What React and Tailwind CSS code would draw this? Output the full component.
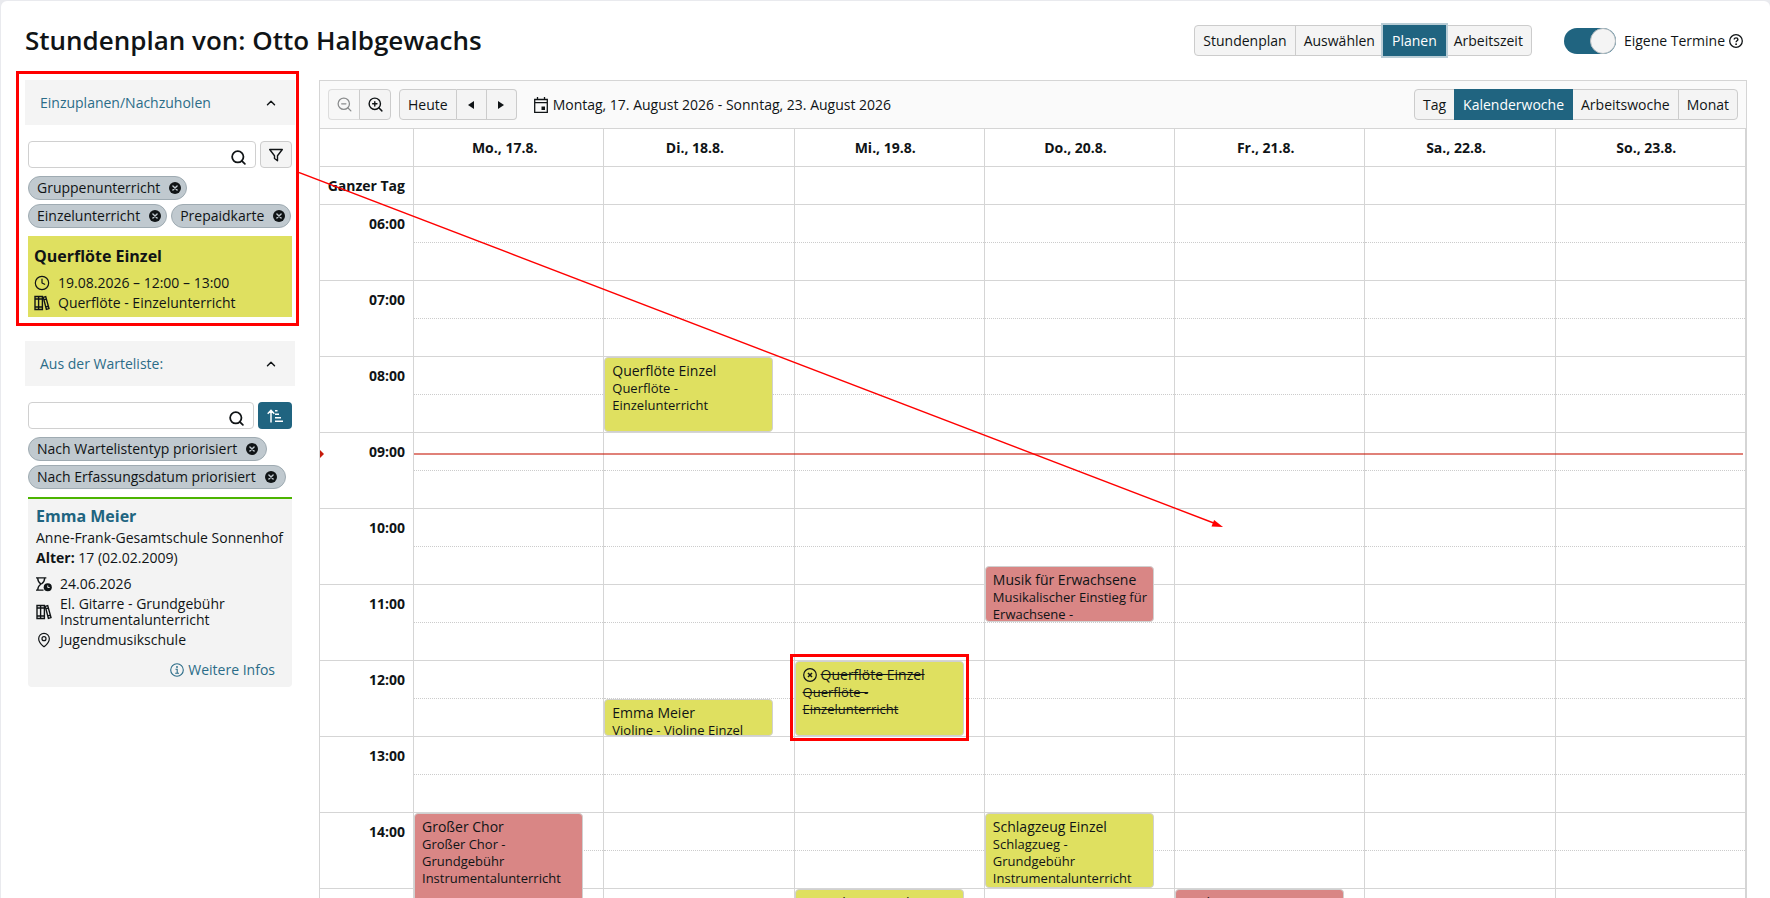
import { useState } from "react";
import { Search, ZoomIn, ZoomOut, ChevronUp, Clock, MapPin } from "lucide-react";

const HOUR_HEIGHT = 76;
const FIRST_HOUR = 6;

const hours = [6, 7, 8, 9, 10, 11, 12, 13, 14, 15];

const days = [
  "Mo., 17.8.",
  "Di., 18.8.",
  "Mi., 19.8.",
  "Do., 20.8.",
  "Fr., 21.8.",
  "Sa., 22.8.",
  "So., 23.8.",
];

const events = [
  { day: 1, start: 8, end: 9, title: "Querflöte Einzel", text: "Querflöte - Einzelunterricht", color: "yellow" },
  { day: 1, start: 12.5, end: 13, title: "Emma Meier", text: "Violine - Violine Einzel", color: "yellow" },
  { day: 2, start: 12, end: 13, title: "Querflöte Einzel", text: "Querflöte - Einzelunterricht", color: "yellow", cancelled: true },
  { day: 3, start: 10.75, end: 11.5, title: "Musik für Erwachsene", text: "Musikalischer Einstieg für Erwachsene -", color: "red" },
  { day: 0, start: 14, end: 16, title: "Großer Chor", text: "Großer Chor - Grundgebühr Instrumentalunterricht", color: "red" },
  { day: 3, start: 14, end: 15, title: "Schlagzeug Einzel", text: "Schlagzueg - Grundgebühr Instrumentalunterricht", color: "yellow" },
  { day: 2, start: 15, end: 16, title: "Saxophon Einzel", text: "Saxophon - Einzelunterricht", color: "yellow" },
  { day: 4, start: 15, end: 16, title: "Orchester", text: "Orchester - Grundgebühr", color: "red" },
];

const eventColors = {
  yellow: "bg-[#dfe060]",
  red: "bg-[#d98685]",
};

function BooksIcon() {
  return (
    <svg viewBox="0 0 16 16" className="h-4 w-4 shrink-0" fill="none" stroke="currentColor" strokeWidth="1.4">
      <path d="M1 1.5h3.6v13H1zM4.6 1.5h3.8v13H4.6zM1 4h7.4M1 12h7.4" />
      <path d="M9.3 2.4l2.4-.8 3.3 12-2.6.8zM10 4.8l2.4-.7M11.9 12l2.5-.8" />
    </svg>
  );
}

function HourglassIcon() {
  return (
    <svg viewBox="0 0 17 16" className="h-4 w-4 shrink-0" fill="none" stroke="currentColor" strokeWidth="1.4">
      <path d="M0 1.5h11M0 14.5h8M1.8 1.5c0 3.6 1 4.7 3.4 6.5C2.8 9.8 1.8 11 1.8 14.5M9.2 1.5c0 3.6-1 4.7-3.4 6.5" />
      <circle cx="12.5" cy="11.5" r="4.3" fill="currentColor" stroke="none" />
      <path d="M12.5 9.5v2.2h2" stroke="#f3f3f3" strokeWidth="1" />
    </svg>
  );
}

function FilterIcon() {
  return (
    <svg viewBox="0 0 16 16" className="h-4 w-4" fill="none" stroke="currentColor" strokeWidth="1.4" strokeLinejoin="round">
      <path d="M1.7 2.5h12.6L9.5 8.7v5L6.5 11.5V8.7z" />
    </svg>
  );
}

function SortIcon() {
  return (
    <svg viewBox="0 0 16 14" className="h-[14px] w-4" fill="none" stroke="currentColor" strokeWidth="1.5">
      <path d="M4 13.5V1.5M.7 4.7L4 1.4l3.3 3.3M8 1.7h2.5M8 5.2h4M8 8.7h6M8 12.2h8" />
    </svg>
  );
}

function CalendarIcon() {
  return (
    <svg viewBox="0 0 14 16" className="h-4 w-[14px]" fill="none" stroke="currentColor" strokeWidth="1.3">
      <path d="M.7 2.5h12.6v12.8H.7zM.7 5.7h12.6M3.5 0v2.5M10.500 0v2.5" />
      <path d="M7.500 9.500h3.500v3.500H7.500z" fill="currentColor" stroke="none" />
    </svg>
  );
}

function RemoveIcon() {
  return (
    <svg viewBox="0 0 12 12" className="h-3 w-3">
      <circle cx="6" cy="6" r="6" fill="#101416" />
      <path d="M3.9 3.9l4.2 4.2M8.1 3.9L3.9 8.1" stroke="#c0c9cf" strokeWidth="1.4" strokeLinecap="round" />
    </svg>
  );
}

function CancelledIcon() {
  return (
    <svg viewBox="0 0 14 14" className="h-[14px] w-[14px] shrink-0" fill="none" stroke="currentColor">
      <circle cx="7" cy="7" r="6.3" strokeWidth="1.2" />
      <path d="M5 5l4 4M9 5L5 9" strokeWidth="1.5" />
    </svg>
  );
}

function InfoIcon() {
  return (
    <svg viewBox="0 0 14 14" className="h-[14px] w-[14px]" fill="none" stroke="currentColor">
      <circle cx="7" cy="7" r="6.3" strokeWidth="1.1" />
      <path d="M5.5 6.2H7.2v4M5.2 10.2h3.8" strokeWidth="1.1" />
      <circle cx="7" cy="4" r=".9" fill="currentColor" stroke="none" />
    </svg>
  );
}

function HelpIcon() {
  return (
    <svg viewBox="0 0 14 14" className="h-[14px] w-[14px]" fill="none" stroke="currentColor">
      <circle cx="7" cy="7" r="6.3" strokeWidth="1.3" />
      <path d="M5.2 5.6c0-2.4 3.7-2.3 3.7-.1 0 1.3-1.8 1.3-1.8 2.7" strokeWidth="1.4" />
      <circle cx="7.1" cy="10.2" r=".9" fill="currentColor" stroke="none" />
    </svg>
  );
}

function ButtonGroup({ items, active, onSelect, ring }) {
  return (
    <div className="flex">
      {items.map((item) => (
        <button
          key={item}
          onClick={() => onSelect(item)}
          className={
            item === active
              ? `relative -ml-px h-[31px] border border-[#206480] bg-[#206480] px-2 text-white ${ring ? "ring-2 ring-[#b9cdd6]" : ""}`
              : "-ml-px h-[31px] border border-[#cccccc] bg-[#f4f4f4] px-2 first:ml-0 first:rounded-l last:rounded-r"
          }
        >
          {item}
        </button>
      ))}
    </div>
  );
}

function Chip({ label, wide }) {
  return (
    <span
      className={`flex h-6 items-center gap-[9px] rounded-full border border-[#9fabb2] bg-[#c0c9cf] pl-2 ${wide ? "pr-2" : "pr-[5px]"}`}
    >
      {label}
      <button aria-label={`${label} entfernen`}>
        <RemoveIcon />
      </button>
    </span>
  );
}

function PanelHeader({ title }) {
  return (
    <button className="flex h-[45px] w-full items-center justify-between bg-[#f4f4f4] pl-[15px] pr-[17px] text-left text-[#2b6c88]">
      {title}
      <ChevronUp size={14} strokeWidth={2.5} className="text-[#101416]" />
    </button>
  );
}

function SearchBox({ label }) {
  return (
    <div className="relative grow">
      <input
        type="text"
        aria-label={label}
        className="block h-[27px] w-full rounded border border-[#d0d0d0] bg-white pl-2 pr-8 outline-none"
      />
      <Search size={17} strokeWidth={2.5} className="absolute right-[9px] top-2" />
    </div>
  );
}

function CalendarEvent({ event }) {
  const { start, end, title, text, color, cancelled } = event;
  return (
    <div
      className="absolute left-0 z-10 w-[169px]"
      style={{
        top: (start % 1) * HOUR_HEIGHT,
        height: (end - start) * HOUR_HEIGHT - 1,
      }}
    >
      <div
        className={`h-full overflow-hidden rounded border border-[#d0d0d0] pl-[7px] pr-[3px] pt-[3px] ${eventColors[color]} ${cancelled ? "line-through" : ""}`}
      >
        <div className="flex items-center gap-1 leading-[19px]">
          {cancelled && <CancelledIcon />}
          {title}
        </div>
        <div className="text-[13px] leading-[17px]">{text}</div>
      </div>
      {cancelled && (
        <div className="pointer-events-none absolute -inset-x-[5px] -bottom-[5px] -top-[7px] border-3 border-[#ff0000]" />
      )}
    </div>
  );
}

export default function App() {
  const [mode, setMode] = useState("Planen");
  const [view, setView] = useState("Kalenderwoche");
  const [ownEvents, setOwnEvents] = useState(true);

  const nowTop = 76 + (9 - FIRST_HOUR) * HOUR_HEIGHT + 20;

  return (
    <div className="h-screen overflow-hidden bg-[#e9eaee] pl-px pt-px font-['Open_Sans','Noto_Sans',sans-serif] text-sm text-[#101416]">
      <div className="min-h-full rounded-t-md bg-white pl-6 pr-[23px] pt-6">
        {/* Page header */}
        <header className="mb-6 flex h-[31px] items-center justify-between">
          <h1 className="text-[26px] font-semibold leading-[31px]">
            Stundenplan von: Otto Halbgewachs
          </h1>
          <div className="flex items-center gap-8 pr-1">
            <ButtonGroup
              items={["Stundenplan", "Auswählen", "Planen", "Arbeitszeit"]}
              active={mode}
              onSelect={setMode}
              ring
            />
            <label className="flex items-center gap-2">
              <input
                type="checkbox"
                role="switch"
                checked={ownEvents}
                onChange={(e) => setOwnEvents(e.target.checked)}
                className="peer sr-only"
              />
              <span className="flex h-[26px] w-[52px] justify-start rounded-full bg-[#9fabb2] peer-checked:justify-end peer-checked:bg-[#206480]">
                <span className="h-[26px] w-[26px] rounded-full border border-[#b5bcc0] bg-[#f4f4f4]" />
              </span>
              <span className="flex items-center gap-1">
                Eigene Termine <HelpIcon />
              </span>
            </label>
          </div>
        </header>

        <div className="flex items-start gap-6">
          {/* Sidebar */}
          <aside className="w-[270px] shrink-0">
            <section className="relative mb-6">
              <PanelHeader title="Einzuplanen/Nachzuholen" />
              <div className="px-[3px] pt-4">
                <div className="flex gap-1">
                  <SearchBox label="Einzuplanende Termine suchen" />
                  <button
                    aria-label="Filter"
                    className="flex h-[27px] w-8 items-center justify-center rounded border border-[#cccccc] bg-[#f4f4f4]"
                  >
                    <FilterIcon />
                  </button>
                </div>
                <div className="mt-2 flex flex-wrap gap-1">
                  <Chip label="Gruppenunterricht" />
                  <Chip label="Einzelunterricht" />
                  <Chip label="Prepaidkarte" />
                </div>
                <div className="mt-2 h-[81px] bg-[#dfe060] px-[6px] pt-2">
                  <h2 className="text-base font-bold leading-6">Querflöte Einzel</h2>
                  <div className="mt-[5px] flex items-center gap-2 leading-5">
                    <Clock size={16} strokeWidth={1.8} />
                    19.08.2026 – 12:00 – 13:00
                  </div>
                  <div className="flex items-center gap-2 leading-5">
                    <BooksIcon />
                    Querflöte - Einzelunterricht
                  </div>
                </div>
              </div>

              {/* Highlight frame and arrow to the target slot */}
              <div className="pointer-events-none absolute -inset-y-[9px] -left-[9px] -right-1 border-3 border-[#ff0000]" />
              <svg
                viewBox="0 0 924 356"
                className="pointer-events-none absolute left-full top-[92px] z-20 ml-1 h-[356px] w-[924px]"
              >
                <path d="M0 .5L916 351.5" stroke="#ff0000" strokeWidth="1.4" />
                <path d="M924 355l-11.5-.5 2.6-6.500z" fill="#ff0000" />
              </svg>
            </section>

            <section>
              <PanelHeader title="Aus der Warteliste:" />
              <div className="px-[3px] pt-4">
                <div className="flex gap-1">
                  <SearchBox label="Warteliste durchsuchen" />
                  <button
                    aria-label="Sortierung"
                    className="flex h-[27px] w-[34px] items-center justify-center rounded bg-[#206480] text-white"
                  >
                    <SortIcon />
                  </button>
                </div>
                <div className="mt-2 flex flex-wrap gap-1">
                  <Chip label="Nach Wartelistentyp priorisiert" wide />
                  <Chip label="Nach Erfassungsdatum priorisiert" wide />
                </div>
                <div className="mt-2 h-[190px] rounded-b border-t-2 border-[#4cb400] bg-[#f3f3f3] px-2 pt-[6px]">
                  <h2 className="text-base font-bold leading-[23px] text-[#206480]">Emma Meier</h2>
                  <p className="whitespace-nowrap leading-5">Anne-Frank-Gesamtschule Sonnenhof</p>
                  <p className="leading-5">
                    <b>Alter:</b> 17 (02.02.2009)
                  </p>
                  <div className="mt-[6px] flex items-center gap-2 leading-5">
                    <HourglassIcon />
                    24.06.2026
                  </div>
                  <div className="mt-[2px] flex items-center gap-2 leading-4">
                    <BooksIcon />
                    <span>
                      El. Gitarre - Grundgebühr
                      <br />
                      Instrumentalunterricht
                    </span>
                  </div>
                  <div className="mt-[2px] flex items-center gap-2 leading-5">
                    <MapPin size={16} strokeWidth={1.8} />
                    Jugendmusikschule
                  </div>
                  <a href="#infos" className="mt-[10px] flex items-center justify-end gap-1 pr-[9px] leading-5 text-[#2b6c88]">
                    <InfoIcon /> Weitere Infos
                  </a>
                </div>
              </div>
            </section>
          </aside>

          {/* Calendar */}
          <main className="min-w-0 grow border border-[#d5d5d5]">
            <div className="flex h-12 items-center justify-between border-b border-[#d5d5d5] bg-[#fafafa] px-2">
              <div className="flex items-center">
                <div className="flex">
                  <button
                    disabled
                    aria-label="Verkleinern"
                    className="flex h-[31px] w-[31px] items-center justify-center rounded-l border border-r-0 border-[#dddddd] bg-[#f7f7f7] text-[#8a8c8d]"
                  >
                    <ZoomOut size={17} strokeWidth={1.8} />
                  </button>
                  <button
                    aria-label="Vergrößern"
                    className="flex h-[31px] w-8 items-center justify-center rounded-r border border-[#cccccc] bg-[#f4f4f4]"
                  >
                    <ZoomIn size={17} strokeWidth={2} />
                  </button>
                </div>
                <div className="ml-2 flex">
                  <button className="h-[31px] rounded-l border border-[#cccccc] bg-[#f4f4f4] px-2">Heute</button>
                  <button
                    aria-label="Vorherige Woche"
                    className="flex h-[31px] w-[30px] items-center justify-center border-y border-r border-[#cccccc] bg-[#f4f4f4]"
                  >
                    <svg viewBox="0 0 6 8" className="h-2 w-[6px]">
                      <path d="M6 0v8L0 4z" fill="currentColor" />
                    </svg>
                  </button>
                  <button
                    aria-label="Nächste Woche"
                    className="flex h-[31px] w-[30px] items-center justify-center rounded-r border-y border-r border-[#cccccc] bg-[#f4f4f4]"
                  >
                    <svg viewBox="0 0 6 8" className="h-2 w-[6px]">
                      <path d="M0 0v8l6-4z" fill="currentColor" />
                    </svg>
                  </button>
                </div>
                <button className="ml-[17px] flex items-center gap-[5px]">
                  <CalendarIcon />
                  Montag, 17. August 2026 - Sonntag, 23. August 2026
                </button>
              </div>
              <ButtonGroup
                items={["Tag", "Kalenderwoche", "Arbeitswoche", "Monat"]}
                active={view}
                onSelect={setView}
              />
            </div>

            <div className="relative">
              <table className="w-full table-fixed border-separate border-spacing-0 border-r border-[#d5d5d5]">
                <thead>
                  <tr className="h-[38px]">
                    <td className="w-[93px] border-b border-[#d5d5d5] p-0" />
                    {days.map((day) => (
                      <th key={day} className="border-b border-l border-[#d5d5d5] p-0 pr-2 font-bold">
                        {day}
                      </th>
                    ))}
                  </tr>
                </thead>
                <tbody>
                  <tr className="h-[38px]">
                    <th className="whitespace-nowrap border-b border-[#d5d5d5] p-0 pr-2 text-right font-bold">
                      Ganzer Tag
                    </th>
                    {days.map((day) => (
                      <td key={day} className="border-b border-l border-[#d5d5d5] p-0" />
                    ))}
                  </tr>
                  {hours.map((hour) => (
                    <tr key={hour} className="h-[76px]">
                      <th className="border-b border-[#d5d5d5] p-0 pr-2 pt-[9px] text-right align-top font-bold">
                        {String(hour).padStart(2, "0")}:00
                      </th>
                      {days.map((day, i) => (
                        <td key={day} className="relative border-b border-l border-[#d5d5d5] p-0 align-top">
                          <div className="h-[38px] border-b border-dotted border-[#cccccc]" />
                          {events
                            .filter((e) => e.day === i && Math.floor(e.start) === hour)
                            .map((e) => (
                              <CalendarEvent key={e.title} event={e} />
                            ))}
                        </td>
                      ))}
                    </tr>
                  ))}
                </tbody>
              </table>

              {/* Current time */}
              <div className="absolute left-[94px] right-[3px] h-[2px] bg-[#c61a0a]/55" style={{ top: nowTop }} />
              <svg viewBox="0 0 4 8" className="absolute left-0 h-2 w-1" style={{ top: nowTop - 3 }}>
                <path d="M0 0l4 4-4 4z" fill="#c61a0a" />
              </svg>
            </div>
          </main>
        </div>
      </div>
    </div>
  );
}
